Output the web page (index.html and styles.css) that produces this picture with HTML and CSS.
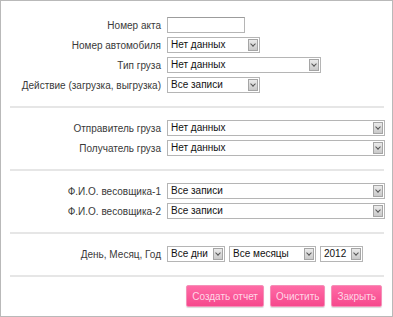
FILE: index.html
```html
<!DOCTYPE html>
<html lang="ru">
<head>
  <meta charset="UTF-8">
  <title>Отчет</title>
  <link rel="stylesheet" href="styles.css">
</head>
<body>
  <div class="frame">
    <div class="section">
      <div class="row">
        <label>Номер акта</label>
        <input type="text" class="field w78">
      </div>
      <div class="row">
        <label>Номер автомобиля</label>
        <span class="sel w93">Нет данных<i class="arrow"></i></span>
      </div>
      <div class="row">
        <label>Тип груза</label>
        <span class="sel w154">Нет данных<i class="arrow"></i></span>
      </div>
      <div class="row">
        <label>Действие (загрузка, выгрузка)</label>
        <span class="sel w93">Все записи<i class="arrow"></i></span>
      </div>
    </div>

    <div class="section">
      <div class="row">
        <label>Отправитель груза</label>
        <span class="sel full">Нет данных<i class="arrow"></i></span>
      </div>
      <div class="row">
        <label>Получатель груза</label>
        <span class="sel full">Нет данных<i class="arrow"></i></span>
      </div>
    </div>

    <div class="section">
      <div class="row">
        <label>Ф.И.О. весовщика-1</label>
        <span class="sel full">Все записи<i class="arrow"></i></span>
      </div>
      <div class="row">
        <label>Ф.И.О. весовщика-2</label>
        <span class="sel full">Все записи<i class="arrow"></i></span>
      </div>
    </div>

    <div class="section">
      <div class="row">
        <label>День, Месяц, Год</label>
        <div class="group">
          <span class="sel w58">Все дни<i class="arrow"></i></span>
          <span class="sel w87">Все месяцы<i class="arrow"></i></span>
          <span class="sel w43">2012<i class="arrow"></i></span>
        </div>
      </div>
    </div>

    <div class="actions">
      <button class="btn">Создать отчет</button>
      <button class="btn">Очистить</button>
      <button class="btn">Закрыть</button>
    </div>
  </div>
</body>
</html>
```

FILE: styles.css
```css
body, html {
  margin: 0;
  padding: 0;
  background: #fff;
  font-family: 'Liberation Sans', Arial, sans-serif;
  font-size: 10px;
}

.frame {
  box-sizing: border-box;
  width: 393px;
  height: 317px;
  border: 1px solid #b9b9b9;
  padding: 0 8px 0 9px;
  color: #3a3a3a;
}

.section {
  padding: 16px 0 13px;
  border-bottom: 2px solid #e6e6e6;
  display: flex;
  flex-direction: column;
  gap: 4px;
}

.section + .section {
  padding-top: 12px;
}

.row {
  display: grid;
  grid-template-columns: 151px 1fr;
  column-gap: 6px;
  align-items: center;
  height: 16px;
}

.row label {
  text-align: right;
  white-space: nowrap;
}

.field {
  box-sizing: border-box;
  height: 16px;
  margin: 0;
  padding: 0 3px;
  border: 1px solid #b5b5b5;
  border-top-color: #9c9c9c;
  font: inherit;
}

.sel {
  position: relative;
  box-sizing: border-box;
  display: block;
  height: 16px;
  line-height: 14px;
  padding: 0 3px;
  border: 1px solid #b5b5b5;
  color: #111;
  white-space: nowrap;
  overflow: hidden;
}

.arrow {
  position: absolute;
  top: 1px;
  right: 1px;
  width: 10px;
  height: 12px;
  box-sizing: border-box;
  border: 1px solid #a5a5a5;
  background: linear-gradient(#eaeaea, #c9c9c9);
}

.arrow::after {
  content: "";
  position: absolute;
  left: 2px;
  top: 2px;
  width: 3px;
  height: 3px;
  border-right: 1px solid #555;
  border-bottom: 1px solid #555;
  transform: rotate(45deg);
}

.w78 { width: 78px; }
.w93 { width: 93px; }
.w154 { width: 154px; }
.w58 { width: 58px; }
.w87 { width: 87px; }
.w43 { width: 43px; }
.full { width: 218px; }

.group {
  display: flex;
  gap: 4px;
}

.actions {
  display: flex;
  justify-content: flex-end;
  gap: 6px;
  padding: 8px 2px 0 0;
}

.btn {
  height: 22px;
  padding: 0 5px;
  border: 1px solid #f490b8;
  border-radius: 2px;
  background: linear-gradient(#ff6ba6, #f6488c);
  color: #ffd6e6;
  font: inherit;
  box-shadow: 0 1px 1px rgba(0, 0, 0, 0.15);
}
```
